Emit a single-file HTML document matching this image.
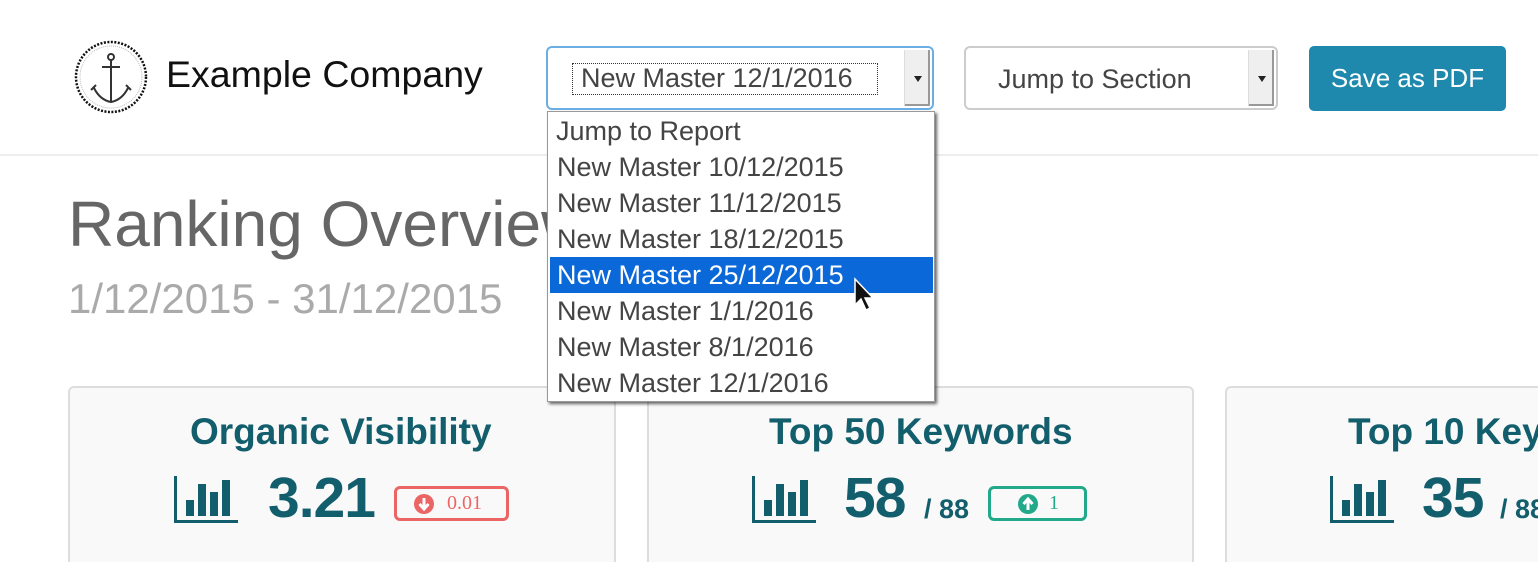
<!DOCTYPE html>
<html><head><meta charset="utf-8"><style>
*{box-sizing:border-box;margin:0;padding:0}
html,body{width:1538px;height:562px;overflow:hidden;background:#fff}
body{font-family:"Liberation Sans",sans-serif}
#w{position:relative;width:1538px;height:562px;overflow:hidden}
.a{position:absolute;white-space:nowrap}
.sel{position:absolute;height:64px;border-radius:6px;background:#fff}
.arr{position:absolute;right:2px;top:2px;bottom:2px;width:26px;background:#efefef;border-left:1px solid #ddd;box-shadow:inset -2px -2px 0 #999}
.arr:after{content:"";position:absolute;left:9px;top:26px;border:4px solid transparent;border-top:6px solid #222}
.card{position:absolute;top:386px;height:200px;background:#f9f9f9;border:2px solid #ddd;border-radius:6px}
.ct{position:absolute;top:411px;font-weight:bold;font-size:37px;color:#135e6c;white-space:nowrap}
.num{position:absolute;top:465px;font-weight:bold;font-size:57px;color:#135e6c;letter-spacing:-1px}
.item{position:absolute;left:2px;width:383px;height:36px;font-size:27px;color:#444;padding-left:7px;line-height:36px}
.badge{position:absolute;top:486px;height:35px;border:3px solid;border-radius:6px;font-family:"Liberation Serif",serif;font-size:20px;line-height:29px}
.ic{position:absolute;top:476px}
</style></head><body><div id="w">
<svg class="a" style="left:72px;top:40px" width="78" height="74" viewBox="0 0 78 74"><circle cx="39" cy="37" r="35" fill="#fff" stroke="#111" stroke-width="2.5" stroke-dasharray="2 1.5"/><circle cx="39" cy="37" r="31" fill="none" stroke="#bbb" stroke-width="1" stroke-dasharray="1 1"/><g stroke="#333" stroke-width="2" fill="none"><circle cx="39" cy="17" r="3"/><path d="M39 20V62M30 27H48M22 48Q28 60 39 62Q50 60 56 48M19 50L24 45M59 50L54 45"/></g></svg>
<div class="a" style="left:166px;top:53px;font-size:37.5px;color:#111">Example Company</div>

<div class="sel" style="left:546px;top:46px;width:388px;border:2px solid #6aaee3">
<div class="a" style="left:24px;top:15px;width:306px;height:32px;border:1px dotted #333"></div>
<div class="a" style="left:33px;top:15px;font-size:27px;color:#444">New Master 12/1/2016</div>
<div class="arr"></div></div>

<div class="sel" style="left:964px;top:46px;width:314px;border:2px solid #ccc">
<div class="a" style="left:32px;top:16px;font-size:27px;color:#444">Jump to Section</div>
<div class="arr"></div></div>

<div class="a" style="left:1309px;top:46px;width:197px;height:65px;background:#1e88ad;border-radius:5px;color:#fff;font-size:26px;text-align:center;line-height:65px">Save as PDF</div>

<div class="a" style="left:0;top:154px;width:1538px;height:2px;background:#eee"></div>

<div class="a" style="left:68px;top:187px;font-size:64px;color:#666">Ranking Overview</div>
<div class="a" style="left:68px;top:275px;font-size:42px;color:#aaa">1/12/2015 - 31/12/2015</div>

<div class="card" style="left:68px;width:548px"></div>
<div class="card" style="left:647px;width:547px"></div>
<div class="card" style="left:1225px;width:340px"></div>

<div class="ct" style="left:190px">Organic Visibility</div>
<div class="ct" style="left:769px">Top 50 Keywords</div>
<div class="ct" style="left:1348px">Top 10 Keywords</div>

<svg class="ic" style="left:173px" width="65" height="47"><g fill="#135e6c"><rect x="1" y="0" width="3" height="47"/><rect x="1" y="44" width="64" height="3"/><rect x="13" y="24" width="8" height="16"/><rect x="25" y="8" width="8" height="32"/><rect x="37" y="16" width="8" height="24"/><rect x="49" y="4" width="8" height="36"/></g></svg>
<div class="num" style="left:268px">3.21</div>
<div class="badge" style="left:394px;width:115px;border-color:#ec6565;color:#ec6565"><svg style="position:absolute;left:16px;top:4px" width="22" height="22"><circle cx="11" cy="11" r="10" fill="#ec6565"/><path d="M11 5V15M6.5 11L11 16L15.5 11" stroke="#fff" stroke-width="3" fill="none"/></svg><span style="position:absolute;left:50px">0.01</span></div>

<svg class="ic" style="left:751px" width="65" height="47"><g fill="#135e6c"><rect x="1" y="0" width="3" height="47"/><rect x="1" y="44" width="64" height="3"/><rect x="13" y="24" width="8" height="16"/><rect x="25" y="8" width="8" height="32"/><rect x="37" y="16" width="8" height="24"/><rect x="49" y="4" width="8" height="36"/></g></svg>
<div class="num" style="left:844px">58</div>
<div class="a" style="left:924px;top:494px;font-size:27px;font-weight:bold;color:#135e6c">/ 88</div>
<div class="badge" style="left:988px;width:99px;border-color:#22a98a;color:#22a98a"><svg style="position:absolute;left:26px;top:4px" width="22" height="22"><circle cx="11" cy="11" r="10" fill="#22a98a"/><path d="M11 17V7M6.5 11L11 6L15.5 11" stroke="#fff" stroke-width="3" fill="none"/></svg><span style="position:absolute;left:58px">1</span></div>

<svg class="ic" style="left:1329px" width="65" height="47"><g fill="#135e6c"><rect x="1" y="0" width="3" height="47"/><rect x="1" y="44" width="64" height="3"/><rect x="13" y="24" width="8" height="16"/><rect x="25" y="8" width="8" height="32"/><rect x="37" y="16" width="8" height="24"/><rect x="49" y="4" width="8" height="36"/></g></svg>
<div class="num" style="left:1422px">35</div>
<div class="a" style="left:1500px;top:494px;font-size:27px;font-weight:bold;color:#135e6c">/ 88</div>

<div class="a" style="left:547px;top:111px;width:388px;height:291px;background:#fff;border:1px solid #999;box-shadow:2px 2px 3px rgba(0,0,0,.6)">
<div class="item" style="top:1px;padding-left:6px">Jump to Report</div>
<div class="item" style="top:37px">New Master 10/12/2015</div>
<div class="item" style="top:73px">New Master 11/12/2015</div>
<div class="item" style="top:109px">New Master 18/12/2015</div>
<div class="item" style="top:145px;background:#0b68d8;color:#fff">New Master 25/12/2015</div>
<div class="item" style="top:181px">New Master 1/1/2016</div>
<div class="item" style="top:217px">New Master 8/1/2016</div>
<div class="item" style="top:253px">New Master 12/1/2016</div>
</div>
<svg class="a" style="left:853px;top:277px" width="24" height="36"><path d="M2 2V28L8 22L13 33L17 31L12 21H20Z" fill="#111" stroke="#fff" stroke-width="1.5"/></svg>
</div></body></html>
